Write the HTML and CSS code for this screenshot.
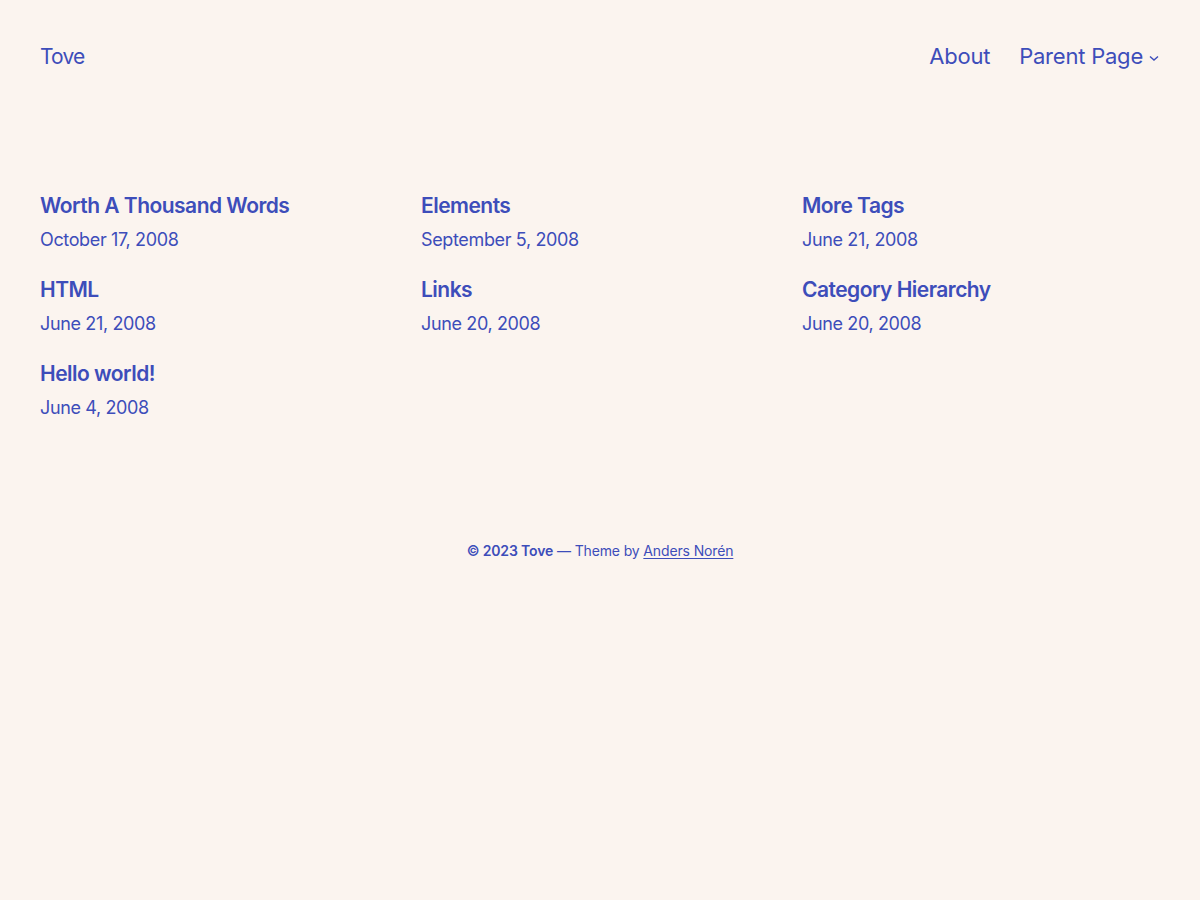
FILE: index.html
```html
<!DOCTYPE html>
<html lang="en">
<head>
    <meta charset="UTF-8">
    <meta name="viewport" content="width=device-width, initial-scale=1.0">
    <title>Tove</title>
    <link rel="stylesheet" href="styles.css">
</head>
<body>
    <div class="site">
        <header class="header">
            <a class="site-title" href="#">Tove</a>
            <nav class="nav">
                <a href="#">About</a>
                <a href="#" class="has-sub">Parent Page
                    <svg class="chevron" width="12" height="12" viewBox="0 0 12 12" fill="none"><path d="M2 4.5l4 3.5 4-3.5" stroke="currentColor" stroke-width="1.4"/></svg>
                </a>
            </nav>
        </header>

        <main class="posts">
            <div class="post">
                <a class="post-title" href="#">Worth A Thousand Words</a>
                <div class="post-date">October 17, 2008</div>
            </div>
            <div class="post">
                <a class="post-title" href="#">Elements</a>
                <div class="post-date">September 5, 2008</div>
            </div>
            <div class="post">
                <a class="post-title" href="#">More Tags</a>
                <div class="post-date">June 21, 2008</div>
            </div>
            <div class="post">
                <a class="post-title" href="#">HTML</a>
                <div class="post-date">June 21, 2008</div>
            </div>
            <div class="post">
                <a class="post-title" href="#">Links</a>
                <div class="post-date">June 20, 2008</div>
            </div>
            <div class="post">
                <a class="post-title" href="#">Category Hierarchy</a>
                <div class="post-date">June 20, 2008</div>
            </div>
            <div class="post">
                <a class="post-title" href="#">Hello world!</a>
                <div class="post-date">June 4, 2008</div>
            </div>
        </main>

        <footer class="footer">
            <strong>© 2023 Tove</strong> — Theme by <a href="#">Anders Norén</a>
        </footer>
    </div>
</body>
</html>
```

FILE: styles.css
```css
* {
    margin: 0;
    padding: 0;
    box-sizing: border-box;
}

body {
    font-family: Inter, 'Noto Sans', sans-serif;
    background: #fbf4ef;
    color: #3d4dba;
    min-height: 100vh;
}

a {
    color: inherit;
    text-decoration: none;
}

.site {
    padding: 41px 40px 40px;
}

.header {
    display: flex;
    justify-content: space-between;
    align-items: center;
    height: 32px;
}

.site-title {
    font-size: 21px;
    letter-spacing: -0.04em;
    line-height: 32px;
}

.nav {
    display: flex;
    gap: 29px;
    margin-bottom: 2px;
    font-size: 22px;
    letter-spacing: -0.01em;
    line-height: 30px;
}

.has-sub {
    display: flex;
    align-items: center;
    gap: 5px;
}

.chevron {
    margin-top: 3px;
}

.posts {
    display: grid;
    grid-template-columns: repeat(3, 1fr);
    column-gap: 23px;
    row-gap: 22px;
    margin-top: 118px;
}

.post-title {
    display: block;
    font-size: 21px;
    font-weight: 600;
    letter-spacing: -0.025em;
    line-height: 30px;
}

.post-date {
    margin-top: 5px;
    font-size: 18px;
    letter-spacing: -0.02em;
    line-height: 27px;
}

.footer {
    margin-top: 119px;
    text-align: center;
    font-size: 14px;
    letter-spacing: -0.01em;
    line-height: 21px;
}

.footer strong {
    font-weight: 600;
}

.footer a {
    text-decoration: underline;
    text-underline-offset: 2px;
}
```
